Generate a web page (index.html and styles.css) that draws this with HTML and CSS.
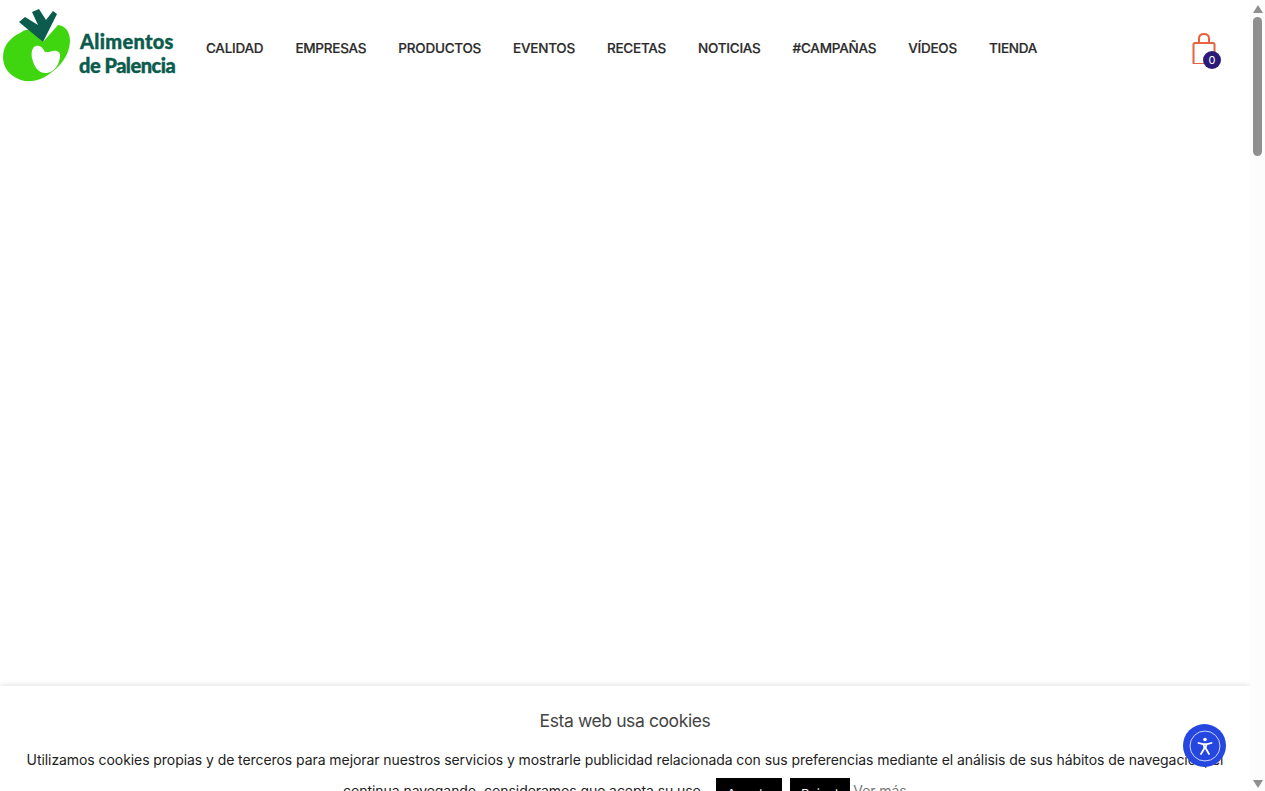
FILE: index.html
```html
<!DOCTYPE html>
<html lang="es">
<head>
<meta charset="utf-8">
<title>Alimentos de Palencia</title>
<link rel="stylesheet" href="styles.css">
</head>
<body>
<div class="page">
  <main class="main">
    <header class="header">
      <a class="logo" href="#">
        <svg class="logo-mark" width="72" height="84" viewBox="0 0 72 84">
          <path class="apple" d="M20 33C24 30 27 29 30 30L43 42L58 25C66 26 70 32 70 42C69 56 60 67 48 75C38 82 24 84 13 76C5 71 1 60 4 50C6 43 12 37 20 33Z"/>
          <path class="heart" d="M45 52C43 48 40 45 36 46C32 47 31 53 32 58C34 67 39 74 47 73C55 72 59 64 60 57C61 52 57 50 53 51C50 52 47 52 45 52Z"/>
          <path class="leaf" d="M19 22L25 17L38 25L32 12L39 9L46 20L53 11L57 14L43 42Z"/>
        </svg>
        <span class="logo-text"><span>Alimentos</span><span>de Palencia</span></span>
      </a>
      <nav class="nav">
        <a href="#">CALIDAD</a>
        <a href="#">EMPRESAS</a>
        <a href="#">PRODUCTOS</a>
        <a href="#">EVENTOS</a>
        <a href="#">RECETAS</a>
        <a href="#">NOTICIAS</a>
        <a href="#">#CAMPAÑAS</a>
        <a href="#">VÍDEOS</a>
        <a href="#">TIENDA</a>
      </nav>
      <a class="cart" href="#">
        <svg width="24" height="32" viewBox="0 0 24 32">
          <rect x="1.500" y="11" width="21" height="21" rx="1.500"/>
          <path d="M7 11V6.500C7 3.500 9 2 12 2C15 2 17 3.500 17 6.500V11"/>
        </svg>
        <span class="badge">0</span>
      </a>
    </header>
    <section class="cookie">
      <h2>Esta web usa cookies</h2>
      <p class="cookie-line">Utilizamos cookies propias y de terceros para mejorar nuestros servicios y mostrarle publicidad relacionada con sus preferencias mediante el análisis de sus hábitos de navegación, el</p>
      <div class="cookie-last">
        <span class="cookie-tail">continua navegando, consideramos que acepta su uso.</span>
        <a class="btn" href="#">Acepto</a>
        <a class="btn btn-reject" href="#">Reject</a>
        <a class="more" href="#">Ver más</a>
      </div>
    </section>
    <button class="a11y" type="button" aria-label="Accesibilidad">
      <svg width="32" height="32" viewBox="0 0 32 32">
        <circle class="ring" cx="16" cy="16" r="15"/>
        <circle class="figure" cx="16" cy="9.500" r="1.800"/>
        <path class="limbs" d="M9.500 13L14 14.200H18L22.500 13M14.500 14.500L15.500 18L12 24M17.500 14.500L16.500 18L20 24"/>
      </svg>
    </button>
  </main>
  <aside class="scrollbar" aria-hidden="true">
    <span class="arrow arrow-up"></span>
    <span class="track"><span class="thumb"></span></span>
    <span class="arrow arrow-down"></span>
  </aside>
</div>
</body>
</html>
```
FILE: styles.css
```css
* { box-sizing: border-box; }
html, body { margin: 0; height: 100%; overflow: hidden; background: #fff; }
body { font-family: "Inter", "Liberation Sans", sans-serif; color: #222; }
a { color: inherit; text-decoration: none; }

.page { display: flex; height: 791px; }
.main { position: relative; flex: 1; min-width: 0; overflow: hidden; }

.header { display: flex; align-items: center; height: 96px; }
.logo { display: flex; align-items: center; width: 206px; }
.logo-mark { flex: none; margin-bottom: 12px; }
.apple { fill: #3fd60f; }
.heart { fill: #fff; }
.leaf { fill: #0b5c4c; }
.logo-text { display: flex; flex-direction: column; margin: 10px 0 0 7px; font-family: "Lato", sans-serif; font-weight: 900; font-size: 20px; line-height: 24px; color: #0b5c4c; white-space: nowrap; -webkit-text-stroke: 0.400px #0b5c4c; }
.logo-text span:first-child { padding-left: 1px; letter-spacing: 0.300px; }
.logo-text span:last-child { letter-spacing: -0.500px; }

.nav { display: flex; gap: 32px; font-size: 13.500px; font-weight: 500; letter-spacing: -0.240px; color: #2b2b2b; -webkit-text-stroke: 0.200px #2b2b2b; }
.cart { position: relative; display: block; margin-left: auto; margin-right: 34px; width: 24px; height: 32px; }
.cart svg { display: block; fill: none; stroke: #e8623f; stroke-width: 2; }
.badge { position: absolute; left: 11px; top: 19px; width: 18px; height: 18px; border-radius: 50%; background: #2c1a78; color: #fff; font-size: 11px; line-height: 18px; text-align: center; }

.cookie { position: absolute; left: 0; right: 0; top: 686px; height: 140px; padding: 24px 0 0; text-align: center; background: #fff; box-shadow: 0 -1px 6px rgba(0, 0, 0, 0.12); }
.cookie h2 { margin: 0 0 18px; font-size: 17.500px; line-height: 22px; font-weight: 400; letter-spacing: -0.400px; color: #444; }
.cookie-line { margin: 0; font-size: 14px; line-height: 20px; letter-spacing: -0.068px; white-space: nowrap; color: #222; }
.cookie-last { display: flex; justify-content: center; align-items: flex-start; margin-top: 8px; font-size: 14px; line-height: 20px; letter-spacing: -0.068px; }
.cookie-tail { width: 362px; padding-top: 3px; margin-right: 11px; white-space: nowrap; }
.btn { display: block; width: 66px; height: 34px; padding-top: 6px; margin-right: 8px; background: #000; color: #fff; font-size: 13px; text-align: center; letter-spacing: 0; }
.btn-reject { width: 60px; margin-right: 3px; }
.more { width: 54px; padding-top: 3px; color: #777; white-space: nowrap; }

.a11y { position: absolute; left: 1183px; top: 724px; width: 43px; height: 43px; padding: 0; border: 0; border-radius: 50%; background: #2547e0; display: flex; align-items: center; justify-content: center; }
.ring { fill: none; stroke: #cdd6ff; stroke-width: 1; }
.figure { fill: #fff; }
.limbs { fill: none; stroke: #fff; stroke-width: 1.800; stroke-linecap: round; stroke-linejoin: round; }

.scrollbar { flex: none; width: 15px; display: flex; flex-direction: column; align-items: center; background: #fcfcfc; }
.arrow { flex: none; width: 0; height: 0; border-left: 5px solid transparent; border-right: 5px solid transparent; }
.arrow-up { margin-top: 5px; border-bottom: 8px solid #8f8f8f; }
.arrow-down { margin-bottom: 3px; border-top: 8px solid #8f8f8f; }
.track { flex: 1; width: 100%; padding: 4px 2px 0; }
.thumb { display: block; width: 9px; margin: 0 auto; height: 139px; border-radius: 5px; background: #8f8f8f; }
```
